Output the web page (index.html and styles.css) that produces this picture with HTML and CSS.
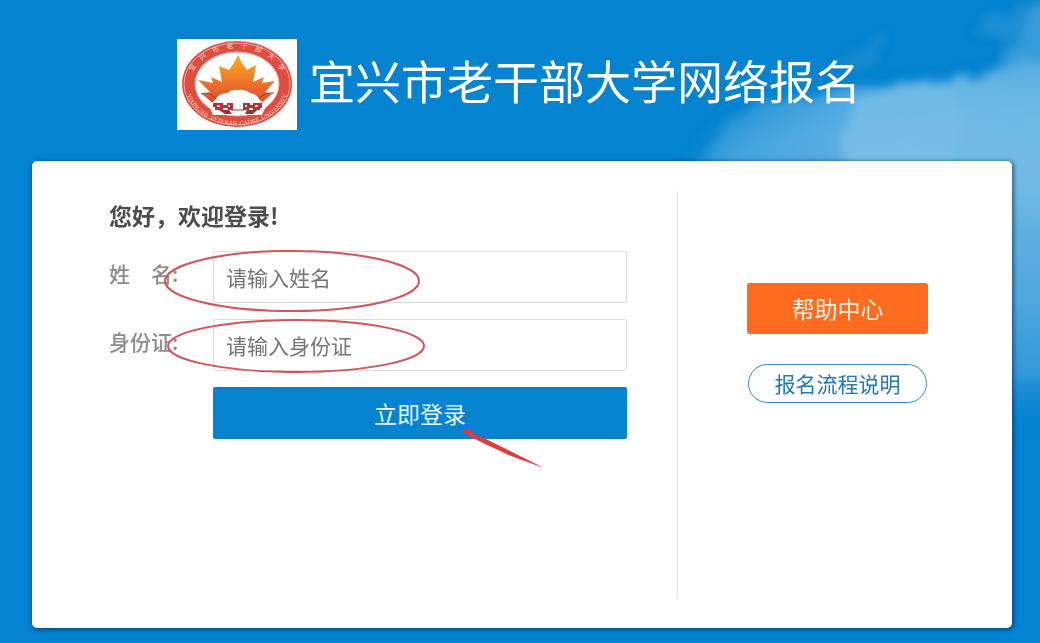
FILE: index.html
```html
<!DOCTYPE html>
<html lang="zh-CN">
<head>
<meta charset="utf-8">
<meta name="viewport" content="width=device-width, initial-scale=1">
<title>宜兴市老干部大学网络报名</title>
<link rel="stylesheet" href="styles.css">
</head>
<body>
<svg class="sky" width="400" height="470" viewBox="640 0 400 470" aria-hidden="true">
  <defs>
    <filter id="soft" x="-20%" y="-20%" width="140%" height="140%"><feGaussianBlur stdDeviation="14"/></filter>
    <filter id="puff" x="-20%" y="-20%" width="140%" height="140%">
      <feTurbulence type="fractalNoise" baseFrequency="0.04" numOctaves="4" seed="4" result="n"/>
      <feDisplacementMap in="SourceGraphic" in2="n" scale="24" xChannelSelector="R" yChannelSelector="G" result="d"/>
      <feGaussianBlur in="d" stdDeviation="5"/>
    </filter>
    <linearGradient id="fall" x1="0" y1="70" x2="0" y2="450" gradientUnits="userSpaceOnUse">
      <stop offset="0" stop-color="#72bae6"/>
      <stop offset=".25" stop-color="#7ec1e8"/>
      <stop offset=".6" stop-color="#5eafe1"/>
      <stop offset=".8" stop-color="#3c9cda"/>
      <stop offset=".96" stop-color="#0683d0" stop-opacity="0"/>
    </linearGradient>
    <linearGradient id="bank" x1="690" y1="0" x2="860" y2="0" gradientUnits="userSpaceOnUse">
      <stop offset="0" stop-color="#5aaee2" stop-opacity=".3"/>
      <stop offset="1" stop-color="#6cb6e5"/>
    </linearGradient>
  </defs>
  <path filter="url(#soft)" fill="#5aaee2" opacity=".6" d="M690 200 L725 135 L800 115 L880 100 L1080 80 V220Z"/>
  <g filter="url(#puff)">
    <path fill="url(#bank)" opacity=".75" d="M690 200 L712 150 L728 118 L755 105 L800 98 L860 92 L900 82 L960 78 V200Z"/>
    <path fill="url(#fall)" opacity=".85" d="M830 200 L855 98 L882 88 L905 80 L925 78 L972 80 L995 68 L1080 54 V470 H990 V200Z"/>
    <path fill="#5bb0e2" opacity=".55" d="M985 80 L1000 60 L1020 36 L1034 4 L1080 -10 V90Z"/>
    <path fill="#3c9bd9" opacity=".45" d="M970 34 L1000 16 L1050 0 V70 L985 70 L1012 44Z"/>
    <path fill="#3c9bd9" opacity=".32" d="M842 62 L866 40 L886 32 L880 60 L860 74Z"/>
  </g>
</svg>

<header class="banner">
  <svg class="logo" viewBox="0 0 120 91" role="img" aria-label="校徽">
    <defs>
      <linearGradient id="leaf" x1="0" y1="0" x2="0" y2="1">
        <stop offset="0" stop-color="#f7ae20"/>
        <stop offset=".5" stop-color="#ef7a28"/>
        <stop offset="1" stop-color="#dc4630"/>
      </linearGradient>
      <path id="arcTop" d="M13 46 A47 37 0 0 1 107 46"/>
      <path id="arcBottom" d="M8 45 A52 41 0 0 0 112 45"/>
    </defs>
    <rect width="120" height="91" fill="#fff"/>
    <ellipse cx="60" cy="45" rx="55" ry="43" fill="#df4c40"/>
    <ellipse cx="60" cy="45" rx="53" ry="41" fill="none" stroke="#f4aaa0" stroke-width="1"/>
    <ellipse cx="60" cy="45" rx="42" ry="32" fill="#fff" stroke="#f4b5aa" stroke-width="1"/>
    <path fill="url(#leaf)" d="M61 16 L65 24 L70 31 L79 26 L76 43 L87 38 L85 44 L98 42 L88 53 L95 55 L82 66 L38 66 L25 55 L33 53 L21 41 L36 44 L34 38 L45 43 L42 27 L52 31 L57 24Z"/>
    <path fill="#fff" d="M32 67 L38 61 Q42 54 50 54 Q55 50 61 51 Q68 50 73 54 Q80 55 83 61 L89 67 L85 76 H36Z"/>
    <path fill="none" stroke="#85413d" stroke-width="1" d="M24 55 Q33 52 39 60 M97 54 Q87 53 82 60"/>
    <path fill="#b92e37" d="M36 64 H46 V66 H50 V64 H56 V71 H51 V69 H46 V71 H38 V68 H36Z M66 64 H73 V66 H76 V64 H85 V69 H83 V71 H76 V69 H72 V71 H66Z"/>
    <path fill="#9c3238" d="M42 71 H52 L55 75 H48Z M68 75 L70 71 H80 L76 75Z"/>
    <path fill="none" stroke="#9c3238" stroke-width="1" d="M54 71 H67"/>
    <path fill="#fff" opacity=".8" d="M40 66 H43 V68 H40Z M51 66 H53 V68 H51Z M68 66 H70 V68 H68Z M78 66 H81 V68 H78Z"/>
    <text class="logo-cn"><textPath href="#arcTop" startOffset="50%">宜　兴　市　老　干　部　大　学</textPath></text>
    <text class="logo-en"><textPath href="#arcBottom" startOffset="50%">YIXINGSHI&#160; VETERAN&#160; CADRE&#160; UNIVERSITY</textPath></text>
  </svg>
  <h1 class="title">宜兴市老干部大学网络报名</h1>
</header>

<main class="card">
  <form class="login">
    <h2 class="welcome">您好，欢迎登录!</h2>
    <div class="row">
      <label class="label" for="name">姓<span class="label-end">名</span>:</label>
      <input class="field" id="name" type="text" placeholder="请输入姓名">
      <svg class="mark mark-name" viewBox="0 0 256 62" aria-hidden="true"><ellipse cx="128" cy="31" rx="127" ry="30"/></svg>
    </div>
    <div class="row">
      <label class="label" for="idcard">身份证:</label>
      <input class="field" id="idcard" type="text" placeholder="请输入身份证">
      <svg class="mark mark-id" viewBox="0 0 258 54" aria-hidden="true"><ellipse cx="129" cy="27" rx="128" ry="26"/></svg>
    </div>
    <div class="row row-submit">
      <button class="submit" type="submit">立即登录</button>
      <svg class="pointer" viewBox="0 0 84 40" aria-hidden="true"><path d="M-1 0 L9 0 L13 4 L27 10 L83 38 L50 26 L24 14 L8 6Z"/></svg>
    </div>
  </form>
  <aside class="side">
    <a class="help" href="#help">帮助中心</a>
    <a class="guide" href="#guide">报名流程说明</a>
  </aside>
</main>
</body>
</html>
```
FILE: styles.css
```css
* { box-sizing: border-box; }

body {
  position: relative;
  display: flex;
  flex-direction: column;
  min-height: 100vh;
  margin: 0;
  overflow-x: hidden;
  background: #0383d0;
  font-family: "Noto Sans CJK SC", sans-serif;
}

.sky {
  position: absolute;
  top: 0;
  right: 0;
  z-index: -1;
}

.banner {
  display: flex;
  align-items: center;
  gap: 12px;
  padding: 39px 32px 31px 177px;
}

.logo {
  flex: none;
  width: 120px;
  height: 91px;
}

.logo-cn,
.logo-en {
  fill: #fbd9d2;
  text-anchor: middle;
}

.logo-cn { font-size: 7px; }

.logo-en {
  font-family: "Liberation Serif", serif;
  font-size: 6px;
}

.title {
  margin: 0;
  padding-bottom: 12px;
  color: #fff;
  font-size: 46px;
  font-weight: 400;
  line-height: 68px;
}

.card {
  display: flex;
  flex: 1;
  margin: 0 28px 15px 32px;
  padding: 30px 0;
  border-radius: 5px;
  background: #fff;
  box-shadow: 1px 1px 4px 1px rgba(0, 40, 80, .6);
}

.login {
  display: flex;
  flex: 1;
  flex-direction: column;
  gap: 16px;
  padding: 8px 50px 0 77px;
  border-right: 1px solid #e6e6e6;
}

.welcome {
  margin: 0 0 4px;
  color: #4c4c4c;
  font-size: 23px;
  font-weight: 700;
  line-height: 32px;
}

.row {
  position: relative;
  display: flex;
}

.label {
  flex: none;
  width: 104px;
  color: #8c8c8c;
  font-size: 21px;
  font-weight: 500;
  line-height: 44px;
}

.label-end { margin-left: 21px; }

.field {
  flex: 1;
  min-width: 0;
  height: 52px;
  padding: 0 12px;
  border: 1px solid #ddd;
  border-radius: 2px;
  background: #fff;
  color: #333;
  font: 400 21px/30px "Noto Sans CJK SC", sans-serif;
}

.field::placeholder {
  color: #757575;
  opacity: 1;
}

.row-submit { padding-left: 104px; }

.submit {
  flex: 1;
  height: 52px;
  border: 0;
  border-radius: 2px;
  background: #0383d0;
  color: #e6f8ff;
  font: 400 23px/32px "Noto Sans CJK SC", sans-serif;
  cursor: pointer;
}

.mark,
.pointer {
  position: absolute;
  pointer-events: none;
}

.mark {
  fill: none;
  stroke: #d2555a;
  stroke-width: 2;
}

.mark-name {
  top: -1px;
  left: 55px;
  width: 256px;
  height: 62px;
}

.mark-id {
  top: 0;
  left: 58px;
  width: 258px;
  height: 54px;
}

.pointer {
  top: 43px;
  left: 352px;
  width: 84px;
  height: 40px;
  fill: #e03c3f;
}

.side {
  display: flex;
  flex: none;
  flex-direction: column;
  align-items: center;
  gap: 30px;
  width: 334px;
  padding: 92px 84px 0 69px;
}

.help,
.guide {
  text-align: center;
  text-decoration: none;
  white-space: nowrap;
}

.help {
  width: 181px;
  border-radius: 3px;
  background: #ff6c20;
  color: #fff2e6;
  font-size: 23px;
  line-height: 51px;
}

.guide {
  width: 179px;
  border: 1px solid #3a8bc2;
  border-radius: 20px;
  color: #2678b4;
  font-size: 21px;
  line-height: 37px;
}
```
